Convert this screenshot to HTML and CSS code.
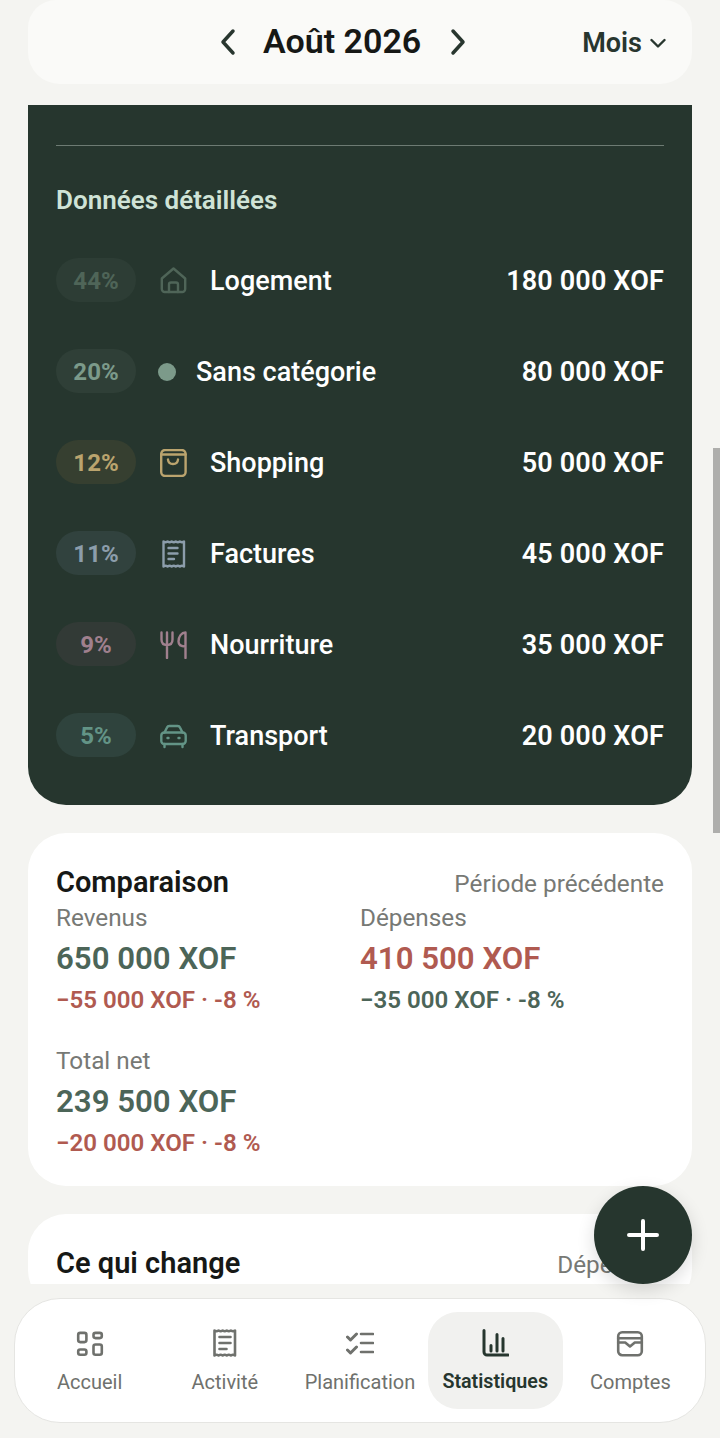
FILE: index.html
```html
<!DOCTYPE html>
<html lang="fr">
<head>
  <meta charset="UTF-8">
  <meta name="viewport" content="width=device-width, initial-scale=1.0">
  <title>Statistiques</title>
  <link rel="stylesheet" href="styles.css">
</head>
<body>
<div class="screen">
  <header class="top">
    <div class="top-card">
      <div class="month-nav">
        <svg class="chev" viewBox="0 0 24 32"><path d="M17 5 7 16l10 11"/></svg>
        <h1>Août 2026</h1>
        <svg class="chev" viewBox="0 0 24 32"><path d="M7 5l10 11L7 27"/></svg>
      </div>
      <div class="period">
        <span>Mois</span>
        <svg viewBox="0 0 16 16"><path d="M1.500 5 8 11.500 14.500 5"/></svg>
      </div>
    </div>
  </header>

  <main class="content">
    <section class="card-dark">
      <h2>Données détaillées</h2>

      <div class="row">
        <span class="pill pill-home">44%</span>
        <svg class="cat-icon icon-home" viewBox="0 0 28 28"><path d="M1.800 11.500 13.500 1.500l11.700 10V22a3 3 0 0 1-3 3H4.800a3 3 0 0 1-3-3z"/><path d="M9 25v-7.500a2 2 0 0 1 2-2h5a2 2 0 0 1 2 2V25"/></svg>
        <span class="label">Logement</span>
        <span class="amount">180 000 XOF</span>
      </div>
      <div class="row">
        <span class="pill pill-none">20%</span>
        <span class="dot"></span>
        <span class="label">Sans catégorie</span>
        <span class="amount">80 000 XOF</span>
      </div>
      <div class="row">
        <span class="pill pill-shop">12%</span>
        <svg class="cat-icon icon-shop" viewBox="0 0 28 28"><rect x="1.200" y="1" width="24.400" height="26" rx="4"/><path d="M1.200 5.500h24.400M8 10.500c.5 6 9.500 6 10 0"/></svg>
        <span class="label">Shopping</span>
        <span class="amount">50 000 XOF</span>
      </div>
      <div class="row">
        <span class="pill pill-bill">11%</span>
        <svg class="cat-icon icon-bill" viewBox="0 0 28 28"><path d="M3.500 1.500q2.050 1.400 4.100 0q2.050 1.400 4.100 0q2.050 1.400 4.100 0q2.050 1.400 4.100 0q2.050 1.400 4.100 0v25q-2.050-1.400-4.100 0q-2.050-1.400-4.100 0q-2.050-1.400-4.100 0q-2.050-1.400-4.100 0q-2.050-1.400-4.100 0z"/><path d="M8.500 8h9M8.500 13.500h9M8.500 19h5.500"/></svg>
        <span class="label">Factures</span>
        <span class="amount">45 000 XOF</span>
      </div>
      <div class="row">
        <span class="pill pill-food">9%</span>
        <svg class="cat-icon icon-food" viewBox="0 0 28 28"><path d="M1.500 1.500v7c0 3.500 2 5.500 5.500 5.500s5.500-2 5.500-5.500v-7M7 1.500V27M25.500 27V1.500c-4 0-7 4-7 9 0 3.500 2 5 7 5"/></svg>
        <span class="label">Nourriture</span>
        <span class="amount">35 000 XOF</span>
      </div>
      <div class="row">
        <span class="pill pill-car">5%</span>
        <svg class="cat-icon icon-car" viewBox="0 0 28 28"><path d="M4.500 10.500 7 5.500A2.500 2.500 0 0 1 9.300 4h8.400a2.500 2.500 0 0 1 2.300 1.500l2.500 5"/><rect x="1.300" y="10.500" width="24.400" height="11.500" rx="3"/><path d="M4.500 22v3M22.500 22v3M7.500 16h1M18.500 16h1"/></svg>
        <span class="label">Transport</span>
        <span class="amount">20 000 XOF</span>
      </div>
    </section>

    <section class="card">
      <div class="card-head">
        <h3>Comparaison</h3>
        <span class="muted">Période précédente</span>
      </div>
      <div class="compare">
        <div class="stat">
          <div class="muted">Revenus</div>
          <div class="value good">650 000 XOF</div>
          <div class="delta bad">−55 000 XOF · -8 %</div>
        </div>
        <div class="stat">
          <div class="muted">Dépenses</div>
          <div class="value bad">410 500 XOF</div>
          <div class="delta good">−35 000 XOF · -8 %</div>
        </div>
        <div class="stat">
          <div class="muted">Total net</div>
          <div class="value good">239 500 XOF</div>
          <div class="delta bad">−20 000 XOF · -8 %</div>
        </div>
      </div>
    </section>

    <section class="card">
      <div class="card-head">
        <h3>Ce qui change</h3>
        <span class="muted">Dépenses</span>
      </div>
    </section>
  </main>

  <nav class="tabbar">
    <a class="tab">
      <svg viewBox="0 0 28 28"><rect x="2.200" y="3.900" width="8.200" height="9.200" rx="2"/><rect x="17.500" y="3.900" width="8.300" height="5.200" rx="2"/><rect x="2.200" y="20.500" width="8.200" height="5.300" rx="2"/><rect x="17.500" y="15.500" width="8.300" height="10.300" rx="2"/></svg>
      <span>Accueil</span>
    </a>
    <a class="tab">
      <svg viewBox="0 0 28 28"><path d="M3.500 1.500q2.050 1.400 4.100 0q2.050 1.400 4.100 0q2.050 1.400 4.100 0q2.050 1.400 4.100 0q2.050 1.400 4.100 0v25q-2.050-1.400-4.100 0q-2.050-1.400-4.100 0q-2.050-1.400-4.100 0q-2.050-1.400-4.100 0q-2.050-1.400-4.100 0z"/><path d="M8.500 8h11M8.500 14h11M8.500 20h7"/></svg>
      <span>Activité</span>
    </a>
    <a class="tab">
      <svg viewBox="0 0 28 28"><path class="tick" d="m1.500 8 3 3 6-6M1.500 21l3 3 6-6"/><path d="M15 5h12M15 14h12M15 23h12"/></svg>
      <span>Planification</span>
    </a>
    <a class="tab tab-active">
      <svg viewBox="0 0 28 28"><path d="M3 1.500V23a3 3 0 0 0 3 3h21M10 16.500V22M16 5.500V22M22 9.500V22"/></svg>
      <span>Statistiques</span>
    </a>
    <a class="tab">
      <svg viewBox="0 0 28 28"><rect x="2.200" y="3.200" width="23.600" height="23" rx="4"/><path d="M2.200 9.200h23.600M2.200 13.500h7l4.800 4 4.800-4h7"/></svg>
      <span>Comptes</span>
    </a>
  </nav>

  <button class="fab" aria-label="Ajouter">
    <svg viewBox="0 0 32 32"><path d="M16 2v28M2 16h28"/></svg>
  </button>
  <div class="scrollbar"></div>
</div>
</body>
</html>
```

FILE: styles.css
```css
* {
  box-sizing: border-box;
}

html, body {
  margin: 0;
  padding: 0;
}

body {
  font-family: Roboto, 'Liberation Sans', sans-serif;
  background-color: #f4f4f1;
  color: #161816;
}

h1, h2, h3 {
  margin: 0;
}

svg {
  fill: none;
  stroke-linecap: round;
  stroke-linejoin: round;
}

.screen {
  position: relative;
  width: 720px;
  height: 1438px;
  overflow: hidden;
  display: flex;
  flex-direction: column;
}

.top {
  height: 105px;
  padding: 0 28px;
  flex-shrink: 0;
}

.top-card {
  height: 84px;
  border-radius: 28px 28px 32px 32px;
  background-color: #fafaf8;
  display: flex;
  align-items: center;
  justify-content: space-between;
  padding-left: 188px;
  padding-right: 26px;
}

.month-nav {
  display: flex;
  align-items: center;
  gap: 23px;
}

.month-nav h1 {
  font-size: 34px;
  font-weight: 600;
  line-height: 40px;
  margin-right: 2px;
  margin-bottom: 2px;
}

.chev {
  width: 24px;
  height: 32px;
  stroke: #28362f;
  stroke-width: 3.5;
}

.period {
  display: flex;
  align-items: center;
  gap: 8px;
  padding-top: 2px;
  font-size: 27px;
  font-weight: 600;
  color: #28362f;
}

.period svg {
  width: 16px;
  height: 16px;
  stroke: #28362f;
  stroke-width: 2.4;
}

.content {
  flex: 1;
  min-height: 0;
  overflow: hidden;
  padding: 0 28px;
  display: flex;
  flex-direction: column;
  gap: 28px;
}

.card-dark {
  flex-shrink: 0;
  height: 700px;
  background-color: #26362e;
  border-radius: 0 0 38px 38px;
  padding: 40px 28px 24px;
}

.card-dark h2 {
  border-top: 1px solid #6d7b73;
  padding-top: 38px;
  height: 90px;
  font-size: 26px;
  line-height: 32px;
  font-weight: 600;
  color: #cfe3d6;
}

.row {
  height: 91px;
  display: flex;
  align-items: center;
  color: #fff;
  font-size: 27px;
  font-weight: 500;
}

.pill {
  width: 80px;
  height: 44px;
  padding-top: 2px;
  border-radius: 22px;
  display: flex;
  align-items: center;
  justify-content: center;
  font-size: 24px;
  font-weight: 700;
  margin-right: 24px;
  margin-bottom: 2px;
}

.pill-home { background-color: #2d3d35; color: #4f6558; }
.pill-none { background-color: #2f3f37; color: #7c9a8a; }
.pill-shop { background-color: #363f30; color: #bba46e; }
.pill-bill { background-color: #31423e; color: #8c9dab; }
.pill-food { background-color: #323a36; color: #a0808e; }
.pill-car { background-color: #2f433d; color: #639486; }

.cat-icon {
  width: 28px;
  height: 28px;
  stroke-width: 2.4;
  margin-right: 22px;
}

.icon-home { stroke: #4f6558; }
.icon-shop { stroke: #bba46e; }
.icon-bill { stroke: #8c9dab; }
.icon-food { stroke: #a0808e; }
.icon-car { stroke: #639486; }

.dot {
  width: 18px;
  height: 18px;
  border-radius: 50%;
  background-color: #7c9a8a;
  margin-left: -2px;
  margin-right: 20px;
}

.amount {
  margin-left: auto;
  font-weight: 600;
  letter-spacing: 0.15px;
}

.card {
  flex-shrink: 0;
  background-color: #fff;
  border-radius: 38px;
  padding: 32px 28px 26px;
}

.card-head {
  display: flex;
  justify-content: space-between;
  align-items: baseline;
  height: 36px;
}

.card-head h3 {
  font-size: 29px;
  font-weight: 600;
}

.muted {
  font-size: 24.3px;
  color: #777975;
  line-height: 32px;
}

.compare {
  display: grid;
  grid-template-columns: 1fr 1fr;
  row-gap: 28px;
  margin-top: 1px;
}

.stat {
  height: 115px;
}

.value {
  font-size: 31.2px;
  font-weight: 600;
  line-height: 42px;
  margin-top: 4px;
}

.delta {
  font-size: 24.1px;
  font-weight: 600;
  line-height: 30px;
  margin-top: 5px;
}

.good { color: #4c6558; }
.bad { color: #b05a50; }

.tabbar {
  flex-shrink: 0;
  height: 125px;
  margin: 14px 14px 15px;
  padding: 13px 7px;
  background-color: #fff;
  border: 1px solid #e5e5e2;
  border-radius: 46px;
  display: flex;
}

.tab {
  flex: 1;
  border-radius: 30px;
  display: flex;
  flex-direction: column;
  align-items: center;
  padding-top: 17px;
  color: #6f716d;
  font-size: 20px;
  white-space: nowrap;
}

.tab svg {
  width: 28px;
  height: 28px;
  stroke: #6f716d;
  stroke-width: 2.6;
  margin-bottom: 13px;
}

.tab svg .tick {
  stroke-width: 3;
}

.tab-active {
  background-color: #f1f1ef;
  color: #26362e;
  font-weight: 600;
  font-size: 19.7px;
}

.tab-active svg {
  stroke: #26362e;
  stroke-width: 3;
}

.fab {
  position: absolute;
  left: 594px;
  top: 1186px;
  width: 98px;
  height: 98px;
  padding: 0;
  border: none;
  border-radius: 50%;
  background-color: #26362e;
  box-shadow: 0 6px 18px rgba(0, 0, 0, 0.14);
  display: flex;
  align-items: center;
  justify-content: center;
}

.fab svg {
  width: 32px;
  height: 32px;
  stroke: #fff;
  stroke-width: 4;
}

.scrollbar {
  position: absolute;
  right: 0;
  top: 448px;
  width: 7px;
  height: 385px;
  background-color: #aeaeac;
}
```
